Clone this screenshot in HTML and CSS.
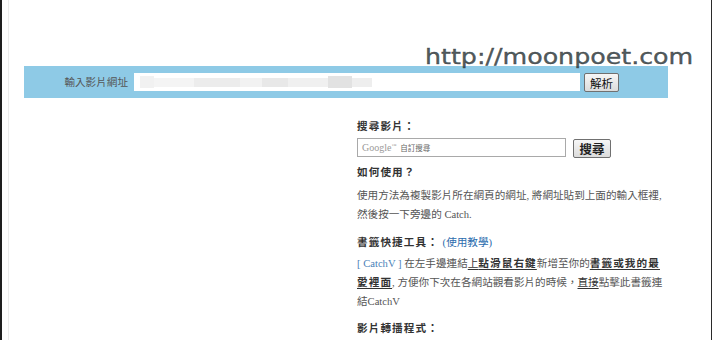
FILE: index.html
```html
<!DOCTYPE html>
<html lang="zh-Hant">
<head>
<meta charset="utf-8">
<title>CatchV</title>
<link rel="stylesheet" href="styles.css">
</head>
<body>
<div class="frame">
  <div class="inner">
    <div class="bar">
      <span class="label">輸入影片網址</span>
      <div class="url">
        <span class="px p1"></span><span class="px p2"></span><span class="px p3"></span><span class="px p4"></span><span class="px p5"></span><span class="px p6"></span><span class="px p7"></span><span class="px p8"></span>
      </div>
      <button class="btn">解析</button>
    </div>
    <div class="col">
      <div class="h">搜尋影片：</div>
      <div class="search">
        <div class="gbox"><span class="glogo">Google<sup>™</sup></span><span class="gtxt">自訂搜尋</span></div>
        <button class="btn sbtn">搜尋</button>
      </div>
      <div class="h h2">如何使用？</div>
      <p class="p p1x">使用方法為複製影片所在網頁的網址, 將網址貼到上面的輸入框裡, 然後按一下旁邊的 Catch.</p>
      <div class="h h3">書籤快捷工具： <a class="lnk">(使用教學)</a></div>
      <p class="p p2x"><a class="lnk2">[ CatchV ]</a> 在左手邊連結<span class="u">上</span><b class="b u">點滑鼠右鍵</b>新增至你的<b class="b u">書籤或我的最愛裡面</b>, 方便你下次在各網站觀看影片的時候，<span class="u">直接</span>點擊此書籤連結CatchV</p>
      <div class="h h4">影片轉播程式：</div>
    </div>
    <div class="mark">http://moonpoet.com</div>
  </div>
</div>
</body>
</html>
```

FILE: styles.css
```css
html, body {
  margin: 0;
  padding: 0;
  background: #fff;
}
.frame {
  width: 709px;
  height: 340px;
  border-left: 2px solid #1e1e1e;
  border-right: 1px solid #2a2a2a;
  overflow: hidden;
  font-family: "Liberation Serif", "Noto Sans CJK TC", serif;
  font-size: 10.6px;
  color: #555;
}
.inner {
  position: relative;
  margin-left: 6px;
  height: 340px;
  border-left: 1px solid #ececec;
  padding-top: 66px;
  box-sizing: border-box;
}
.bar {
  margin-left: 15px;
  width: 644px;
  height: 32px;
  box-sizing: border-box;
  background: #8ecae6;
  display: flex;
  align-items: flex-start;
  padding-top: 7px;
}
.label {
  width: 104px;
  text-align: right;
  font-family: "Noto Sans CJK TC", sans-serif;
  font-size: 10.6px;
  line-height: 18px;
  color: #555;
  margin-right: 6px;
}
.url {
  width: 446px;
  height: 18px;
  background: #fff;
  display: flex;
  align-items: center;
  padding-left: 6px;
  box-sizing: border-box;
}
.px { display: block; height: 9px; }
.p1 { width: 14px; background: #f1f1f1; height: 12px; }
.p2 { width: 40px; background: #f4f4f4; }
.p3 { width: 46px; background: #ececec; }
.p4 { width: 22px; background: #f2f2f2; }
.p5 { width: 26px; background: #e8e8e8; }
.p6 { width: 40px; background: #f0f0f0; }
.p7 { width: 24px; background: #e2e2e2; height: 12px; }
.p8 { width: 20px; background: #eeeeee; }
.btn {
  margin: 0 0 0 4px;
  padding: 0;
  width: 35px;
  height: 19px;
  border: 1px solid #707070;
  border-radius: 2px;
  background: linear-gradient(#f6f6f6, #dcdcdc);
  font-family: "Noto Sans CJK TC", sans-serif;
  font-size: 11.5px;
  line-height: 16px;
  color: #111;
}
.col {
  margin-left: 348px;
  margin-top: 19px;
  width: 308px;
}
.h {
  font-weight: bold;
  letter-spacing: 1.1px;
  color: #333;
  line-height: 19px;
}
.search {
  display: flex;
  align-items: flex-start;
  margin-top: 2px;
}
.gbox {
  width: 209px;
  height: 19px;
  box-sizing: border-box;
  border: 1px solid #a9a9a9;
  display: flex;
  align-items: center;
  padding-left: 4px;
  gap: 4px;
}
.glogo {
  font-family: "Liberation Serif", serif;
  font-size: 10px;
  color: #9a9a9a;
}
.glogo sup { font-size: 5px; vertical-align: 4px; }
.gtxt {
  font-family: "Noto Sans CJK TC", sans-serif;
  font-size: 7.5px;
  color: #666;
}
.sbtn {
  margin-left: 7px;
  margin-top: 1px;
  width: 38px;
  font-size: 12.5px;
  font-weight: bold;
  color: #222;
}
.h2 { margin-top: 5px; }
.p {
  margin: 0;
  line-height: 19px;
}
.p1x { margin-top: 5px; line-height: 18.5px; }
.h3 { margin-top: 9px; }
.lnk {
  color: #2b6cae;
  font-weight: normal;
  letter-spacing: 0;
}
.lnk2 { color: #4a7fb8; }
.p2x { margin-top: 2px; }
.u { text-decoration: underline; text-underline-offset: 2px; color: #333; }
.b { font-weight: bold; letter-spacing: 1.1px; }
.h4 { margin-top: 8px; }
.mark {
  position: absolute;
  left: 416px;
  top: 46px;
  font-family: "DejaVu Sans", sans-serif;
  font-size: 22px;
  line-height: 1;
  color: rgba(50, 60, 64, 0.85);
  -webkit-text-stroke: 0.4px rgba(50, 60, 64, 0.85);
  transform: scaleX(1.15);
  transform-origin: left top;
  white-space: nowrap;
}
```
